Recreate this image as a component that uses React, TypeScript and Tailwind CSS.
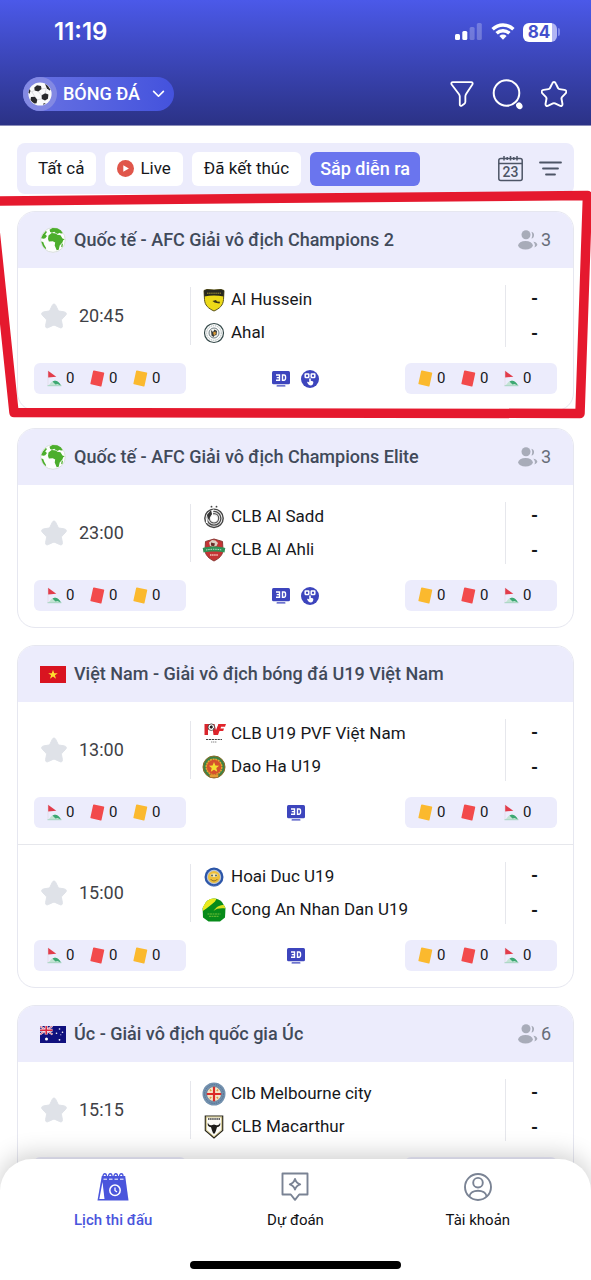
import type { ReactNode } from "react";

type CrestName =
  | "hussein"
  | "ahal"
  | "sadd"
  | "ahli"
  | "pvf"
  | "daoha"
  | "hoaiduc"
  | "congan"
  | "melbourne"
  | "macarthur";

type Match = {
  time: string;
  home: { name: string; crest: CrestName };
  away: { name: string; crest: CrestName };
  lineup: boolean;
};

type League = {
  title: string;
  flag: "globe" | "vietnam" | "australia";
  viewers?: number;
  matches: Match[];
};

const leagues: League[] = [
  {
    title: "Quốc tế - AFC Giải vô địch Champions 2",
    flag: "globe",
    viewers: 3,
    matches: [
      {
        time: "20:45",
        home: { name: "Al Hussein", crest: "hussein" },
        away: { name: "Ahal", crest: "ahal" },
        lineup: true,
      },
    ],
  },
  {
    title: "Quốc tế - AFC Giải vô địch Champions Elite",
    flag: "globe",
    viewers: 3,
    matches: [
      {
        time: "23:00",
        home: { name: "CLB Al Sadd", crest: "sadd" },
        away: { name: "CLB Al Ahli", crest: "ahli" },
        lineup: true,
      },
    ],
  },
  {
    title: "Việt Nam - Giải vô địch bóng đá U19 Việt Nam",
    flag: "vietnam",
    matches: [
      {
        time: "13:00",
        home: { name: "CLB U19 PVF Việt Nam", crest: "pvf" },
        away: { name: "Dao Ha U19", crest: "daoha" },
        lineup: false,
      },
      {
        time: "15:00",
        home: { name: "Hoai Duc U19", crest: "hoaiduc" },
        away: { name: "Cong An Nhan Dan U19", crest: "congan" },
        lineup: false,
      },
    ],
  },
  {
    title: "Úc - Giải vô địch quốc gia Úc",
    flag: "australia",
    viewers: 6,
    matches: [
      {
        time: "15:15",
        home: { name: "Clb Melbourne city", crest: "melbourne" },
        away: { name: "CLB Macarthur", crest: "macarthur" },
        lineup: false,
      },
    ],
  },
];

/* ---------- status bar ---------- */

function StatusBar() {
  return (
    <div className="flex h-16 items-center justify-between pr-[31px] pl-[54px] text-white">
      <span className="font-[Inter,sans-serif] text-2xl leading-7 font-semibold">11:19</span>
      <div className="flex items-center gap-2">
        <svg width="28" height="18" viewBox="0 0 28 18" fill="#fff">
          <rect x="0" y="11" width="5" height="6" rx="1.5" />
          <rect x="7.3" y="8" width="5" height="9" rx="1.5" />
          <rect x="14.6" y="4" width="5" height="13" rx="1.5" opacity=".25" />
          <rect x="21.8" y="0" width="5" height="17" rx="1.5" opacity=".25" />
        </svg>
        <svg width="24" height="18" viewBox="0 0 24 18" fill="none" stroke="#fff" strokeWidth="3.400">
          <path d="M1.600 6.300C7.500.5 16.500.5 22.400 6.300" />
          <path d="M5.600 10.300C9.200 6.800 14.800 6.800 18.400 10.300" />
          <path d="M8.400 12.900a5.200 5.200 0 0 1 7.200 0L12 16.700z" fill="#fff" stroke="none" />
        </svg>
        <div className="flex items-center">
          <span className="flex h-[19px] w-[34px] items-center justify-center rounded-md bg-linear-to-r from-white from-85% to-[#b2b5f3] to-85% pr-0.5 font-[Inter,sans-serif] text-[17px] leading-5 font-bold text-[#4450cc]">
            84
          </span>
          <span className="ml-px h-2 w-0.5 rounded-r bg-[#8088ea]" />
        </div>
      </div>
    </div>
  );
}

/* ---------- header icons ---------- */

function Ball() {
  return (
    <svg width="24" height="24" viewBox="0 0 24 24">
      <circle cx="12" cy="12" r="11.600" fill="#fafafa" />
      <g fill="#2a2a2c">
        <path d="M6.300 5.600l2.700-2.300 4 .7.600 3-3.300 2.600-3.700-1.100z" />
        <path d="M13.600 13.300l3.600-2.100 3.200 1.300-.500 4.200-2.900 1.800-3.200-1.500z" />
        <path d="M3 15l3.900-.3 2.400 3-.8 3.500-2.100.3A12 12 0 0 1 2.500 18z" />
        <path d="M17 1.800a12 12 0 0 1 5.500 5.900l-1 .9-2.700-2.400z" />
        <path d="M.6 10.500a11 11 0 0 1 1-3.500l.9 2.100-1.100 3z" />
        <path d="M15.500 21.300l2.300-.1-2.500 1.800z" />
      </g>
      <path
        d="M10.300 9.600l3.300 3.700M13.800 17l-4.500.7M13.600 7l4.300-.8M17.200 11.200l1-4.500M6.600 8.500L3 10M6.900 14.700L4 10"
        stroke="#c9c9cf"
        strokeWidth=".6"
        fill="none"
      />
    </svg>
  );
}

function FunnelIcon() {
  return (
    <svg width="24" height="28" viewBox="0 0 25 28" fill="none" stroke="#fff" strokeWidth="1.900" strokeLinejoin="round">
      <path d="M3 1.600h19c1.500 0 2.100 1.200 1.300 2.500l-6.500 10c-.6.900-.8 1.700-.8 2.600v5.500c0 .9-.3 1.500-1 2l-2.500 1.800c-1.300.8-2.300.3-2.300-1.100v-8.200c0-.9-.3-1.700-.8-2.500L1.700 4.100C.9 2.800 1.500 1.600 3 1.600z" />
    </svg>
  );
}

function SearchIcon() {
  return (
    <svg width="31" height="31" viewBox="0 0 31 31" fill="none">
      <circle cx="14.500" cy="14" r="12.800" stroke="#fff" strokeWidth="2" />
      <ellipse cx="27.300" cy="26.800" rx="3" ry="3.500" fill="#fff" transform="rotate(-35 27.300 26.800)" />
    </svg>
  );
}

const starPath =
  "M11.300 2.300c.7-1.700 2.700-1.700 3.400 0l2.300 4.700c.3.600.8 1 1.500 1.100l4.900.8c2 .3 2.600 2 1.200 3.500l-3.600 3.700c-.5.500-.6 1.100-.5 1.700l.9 4.700c.4 2-1 3-2.700 2.100L14 22.400c-.7-.3-1.300-.3-2 0l-4.700 2.200c-1.700.9-3.100-.1-2.700-2.100l.9-4.700c.1-.6 0-1.200-.5-1.700L1.400 12.400C0 10.900.6 9.200 2.600 8.900l4.900-.8C8.200 8 8.700 7.600 9 7z";

function StarIcon({ filled }: { filled?: boolean }) {
  return (
    <svg
      width="26"
      height="27"
      viewBox="0 0 26 27"
      fill={filled ? "#dfe2e8" : "none"}
      stroke={filled ? "#dfe2e8" : "#fff"}
      strokeWidth={filled ? 1 : 1.9}
      strokeLinejoin="round"
    >
      <path d={starPath} />
    </svg>
  );
}

function Header() {
  return (
    <header className="h-[126px] shrink-0 border-b border-[#8b8db9] bg-linear-to-b from-[#4b59e9] to-[#2b3286]">
      <StatusBar />
      <div className="flex items-center justify-between pt-[13px] pr-6 pl-[23px]">
        <button
          type="button"
          className="flex h-[34px] items-center rounded-full bg-linear-to-r from-[#6972e2] to-[#4452dd] pr-[9px] text-lg font-medium text-white"
        >
          <span className="mr-1.5 flex size-[34px] items-center justify-center rounded-full bg-[#8389e3]">
            <Ball />
          </span>
          BÓNG ĐÁ
          <svg className="ml-3" width="13" height="8" viewBox="0 0 14 9" fill="none" stroke="#fff" strokeWidth="1.900" strokeLinecap="round" strokeLinejoin="round">
            <path d="M1.500 1.500L7 7l5.500-5.500" />
          </svg>
        </button>
        <div className="flex items-center gap-[18px]">
          <button type="button" aria-label="Bộ lọc">
            <FunnelIcon />
          </button>
          <button type="button" aria-label="Tìm kiếm">
            <SearchIcon />
          </button>
          <button type="button" aria-label="Yêu thích">
            <StarIcon />
          </button>
        </div>
      </div>
    </header>
  );
}

/* ---------- filter bar ---------- */

function FilterButton({ active, children }: { active?: boolean; children: ReactNode }) {
  return (
    <button
      type="button"
      className={
        active
          ? "flex h-[34px] items-center gap-1.5 rounded-md bg-[#6a75ee] px-2.5 text-lg font-medium text-white"
          : "flex h-[34px] items-center gap-1.5 rounded-md bg-white px-3 text-[17px] text-[#16171b]"
      }
    >
      {children}
    </button>
  );
}

function FilterBar() {
  return (
    <div className="flex h-[51px] items-center justify-between rounded-lg bg-[#ececfc] pr-3 pl-[9px]">
      <div className="flex gap-[9px]">
        <FilterButton>Tất cả</FilterButton>
        <FilterButton>
          <svg width="17" height="17" viewBox="0 0 17 17">
            <circle cx="8.500" cy="8.500" r="8.500" fill="#e0564a" />
            <path d="M6.300 5.200v6.600l5.600-3.300z" fill="#fff" />
          </svg>
          Live
        </FilterButton>
        <FilterButton>Đã kết thúc</FilterButton>
        <FilterButton active>Sắp diễn ra</FilterButton>
      </div>
      <div className="flex items-center gap-4">
        <button type="button" aria-label="Chọn ngày 23" className="block">
          <svg width="25" height="26" viewBox="0 0 25 26" fill="none" stroke="#4d5566" strokeWidth="1.500">
            <rect x=".8" y="2.500" width="23.400" height="22" rx="2" />
            <path d="M.8 7.500h23.400M6 0v4.500M12.500 0v4.500M19 0v4.500M9.200 1v3M15.800 1v3" />
            <text
              x="12.500"
              y="21"
              textAnchor="middle"
              fontFamily="Roboto, sans-serif"
              fontSize="14"
              fontWeight="500"
              fill="#4d5566"
              stroke="none"
            >
              23
            </text>
          </svg>
        </button>
        <button type="button" aria-label="Sắp xếp" className="block">
          <svg width="23" height="15" viewBox="0 0 23 15" fill="none" stroke="#4d5566" strokeWidth="1.800" strokeLinecap="round">
            <path d="M1 1.500h21M4 7.500h15M7 13.500h9" />
          </svg>
        </button>
      </div>
    </div>
  );
}

/* ---------- league flags ---------- */

function Flag({ kind }: { kind: League["flag"] }) {
  if (kind === "globe") {
    return (
      <svg width="26" height="26" viewBox="0 0 26 26">
        <circle cx="13" cy="13" r="12.300" fill="#fcfdfc" stroke="#d9dfdc" strokeWidth="1" />
        <g fill="#4cae2c">
          <path d="M8.500 8.500l3.200-2.500 4.300.5 1.300 1.300 3.200.5 2 3.200 2.200.8-1.500 1-.8 2.200-2.700 3-1 4.300-2 .5-2-4.800.5-3-2.500-1.200-3.800.2L8 12z" />
          <path d="M9.500 2.800l3-1.800 4.700.3 3.600 2 2 3-1.800.2-2-.8-1 1.200-2.300-.8-1.500-1.300-2.200.9-1.800-.7z" />
          <path d="M1.200 11.200L2.800 7.500l3-3.500 1.200 1-1.800 2.500 1.800 1.500-1.700 2.200-1.700.5z" />
          <path d="M1.200 14.500l2 .5 1 2.700 2 3.500-.8.700A13 13 0 0 1 1.200 14.500z" />
          <path d="M21.500 17.500l1.500-1.200-.5 3-1.300 1.200z" />
        </g>
      </svg>
    );
  }
  if (kind === "vietnam") {
    return (
      <svg width="26" height="17" viewBox="0 0 26 17">
        <rect width="26" height="17" fill="#d91420" />
        <path d="M13 3.800l1.200 3.400h3.600l-2.900 2.100 1.100 3.400-3-2.100-3 2.100 1.100-3.400-2.900-2.100h3.600z" fill="#ffde2e" />
      </svg>
    );
  }
  return (
    <svg width="26" height="17" viewBox="0 0 26 17">
      <rect width="26" height="17" fill="#10107e" />
      <path d="M0 0l12.500 8.500M12.500 0L0 8.500" stroke="#f4e8f0" strokeWidth="2" />
      <path d="M0 0l12.500 8.500M12.500 0L0 8.500" stroke="#d33a50" strokeWidth=".7" />
      <path d="M6.250 0v8.500M0 4.250h12.500" stroke="#f4e8f0" strokeWidth="3" />
      <path d="M6.250 0v8.500M0 4.250h12.500" stroke="#d8263f" strokeWidth="1.600" />
      <g fill="#fff">
        <circle cx="6.500" cy="13" r="1.500" />
        <circle cx="19.500" cy="3" r=".8" />
        <circle cx="16.500" cy="7.300" r=".8" />
        <circle cx="22.500" cy="6.300" r=".8" />
        <circle cx="19.500" cy="13.800" r=".9" />
        <circle cx="20.800" cy="8.800" r=".5" />
      </g>
    </svg>
  );
}

function Viewers({ count }: { count: number }) {
  return (
    <span className="flex items-center gap-[3px] text-lg text-[#676d79]">
      <svg width="20" height="20" viewBox="0 0 20 20" fill="#a8acb9">
        <circle cx="8" cy="4.800" r="4.500" />
        <ellipse cx="7.500" cy="15.300" rx="7.300" ry="4.300" />
        <path d="M13.400 1.700c3.600.4 3.600 6.400 0 6.900 1.100-2.300 1.100-4.600 0-6.900z" />
        <path d="M15.200 11.700c4.300.3 6.100 4 1.200 5.800 1-2.200.5-4.200-1.200-5.800z" />
      </svg>
      {count}
    </span>
  );
}

/* ---------- club crests ---------- */

function Crest({ name }: { name: CrestName }) {
  const art: Record<CrestName, ReactNode> = {
    hussein: (
      <>
        <path d="M2 2.500l3-1 7 .5 7-.5 3 1-.5 9c-.3 6-4 9-9.500 11.500C6.500 20.500 2.800 17.500 2.500 11.500z" fill="#ecd918" stroke="#5a5318" strokeWidth="1" />
        <path d="M2 2.500l3-1 7 .5 7-.5 3 1-.3 6c-6-1.200-13.400-1.200-19.400 0z" fill="#28281f" />
        <path d="M5 5.200h14" stroke="#a49835" strokeWidth="1" strokeDasharray="1.500 .6" />
        <path d="M10.500 13l3.500-1 1 1.500 3 .3-.5 1.700-3-.5-2-.5z" fill="#3b3616" />
      </>
    ),
    ahal: (
      <>
        <circle cx="12" cy="12" r="9.500" fill="#fbfcfb" stroke="#364a4b" strokeWidth="1.200" />
        <circle cx="12" cy="12" r="7.300" fill="none" stroke="#a5b0b2" strokeWidth="1" strokeDasharray="1.300 .9" />
        <circle cx="12" cy="12" r="5" fill="#f3f3ef" stroke="#52626a" strokeWidth=".8" />
        <path d="M9 9l2 2 1.500-2.500L15 10l-.5 4-2 .5-1 1.500-2-1.500z" fill="#3a3c3a" />
        <path d="M11 11.500l2.500-1 .5 2.500-2 1.500z" fill="#d99a35" />
      </>
    ),
    sadd: (
      <>
        <circle cx="9.500" cy="1.700" r=".9" fill="#444" />
        <circle cx="14.500" cy="1.700" r=".9" fill="#444" />
        <circle cx="12" cy="13.300" r="9.200" fill="#ececec" stroke="#444" strokeWidth="1.400" />
        <circle cx="12" cy="13.300" r="6.900" fill="none" stroke="#4b4b4b" strokeWidth="1.300" />
        <circle cx="12" cy="13.300" r="4.700" fill="none" stroke="#555" strokeWidth="1.200" />
        <circle cx="12" cy="13.500" r="3" fill="#fff" />
        <path d="M4.500 18c0-5 1.500-8.500 6-12-1 5 0 7 3 8" fill="none" stroke="#fff" strokeWidth="1.600" />
        <path d="M5 10l4-5 1 4-4 6z" fill="#333" />
      </>
    ),
    ahli: (
      <>
        <path d="M3.500 3.500L12 1l8.500 2.500.5 9c-.5 5-4 8-9 10.500-5-2.500-8.500-5.500-9-10.500z" fill="#c53435" stroke="#8b3b36" strokeWidth="1" />
        <path d="M7 4.500l3-2.500 3.500.5L16 5l-1.500 3L11 9 8 8z" fill="#ddd0c4" />
        <path d="M9 4.500l4 1-1 3-3-1z" fill="#6c2a28" />
        <path d="M.7 10c7-2 15.600-2 22.600 0l-.8 4.500c-6-1.300-15-1.300-21 0z" fill="#2f9155" />
        <path d="M4 12c5-1 11-1 16 0" stroke="#b5d8bf" strokeWidth="1" fill="none" strokeDasharray="1.500 .8" />
        <path d="M8 17h8" stroke="#f0c8bd" strokeWidth="1.300" strokeDasharray="1.500 .6" />
      </>
    ),
    pvf: (
      <>
        <path d="M2.500 2h6c2.500 0 3 5-1 5.500H6V13H2.500z" fill="#d8252c" />
        <path d="M10 2h2.500l1.500 6 2.500-6H20l-5.500 11h-3z" fill="#d8252c" />
        <path d="M16.500 2H24l-1 2.800h-4L18.500 6.500H22l-.8 2.500H17.500L16 13h-2z" fill="#e1242b" />
        <circle cx="9.300" cy="5.200" r="3.300" fill="#fff" stroke="#222" strokeWidth=".7" />
        <path d="M8 4l2-.7 1 1.900-1.500 1.500L7.700 6zM11 7l1-1.300V7.500z" fill="#222" />
        <path d="M4 17.500h16" stroke="#444" strokeWidth="1.200" strokeDasharray="2.200 .7" />
        <path d="M9 20h6" stroke="#888" strokeWidth="1" strokeDasharray="1.300 .6" />
      </>
    ),
    daoha: (
      <>
        <circle cx="12" cy="12" r="11" fill="#3d8245" stroke="#8c6a26" strokeWidth="1" />
        <circle cx="12" cy="12" r="7.800" fill="#d5512c" stroke="#e4a62c" strokeWidth="1.500" strokeDasharray="2 .7" />
        <path d="M12 7l1.400 3.400 3.700.3-2.800 2.400.9 3.600-3.200-2-3.200 2 .9-3.600-2.800-2.400 3.700-.3z" fill="#f4dd31" />
        <path d="M7 19.500h10l-1.500 3h-7z" fill="#d8702c" />
        <path d="M8 21h8" stroke="#f0c73b" strokeWidth="1" />
      </>
    ),
    hoaiduc: (
      <>
        <circle cx="12" cy="12" r="9.500" fill="#2c56a8" />
        <circle cx="12" cy="12" r="6.600" fill="#eebf38" stroke="#b8c2d5" strokeWidth="1.200" />
        <path d="M8.300 9.500c1.500-1.500 6-1.500 7.400 0L15 12H9z" fill="#f5e7aa" />
        <circle cx="10" cy="10.500" r="1" fill="#566" />
        <circle cx="14" cy="10.500" r="1" fill="#566" />
        <path d="M8.500 14c2 2.500 5 2.500 7 0" stroke="#8e6f26" strokeWidth="1" fill="none" />
        <path d="M5 18a9.500 9.500 0 0 0 14 0" stroke="#7895cf" strokeWidth="1" fill="none" strokeDasharray="1 .7" />
      </>
    ),
    congan: (
      <>
        <path d="M4 4A11.500 11.500 0 0 1 12 .5 11.500 11.500 0 0 1 20 4l3.500 6-.5 9.500-5 4H6.500L1 19.500.6 10z" fill="#078b1a" />
        <path d="M4 4A11.500 11.500 0 0 1 14.500.8L13 3.500C10 6.500 5 10 .8 13L1 9z" fill="#e9ea1e" />
        <path d="M23.500 10.500C18 10 14.500 10.500 11.500 13c3-4.500 6.500-6 10.500-6z" fill="#d7df20" />
        <path d="M5.500 16h13M7 18.300h10" stroke="#6fbd34" strokeWidth="1" strokeDasharray="2 .5" />
      </>
    ),
    melbourne: (
      <>
        <circle cx="12" cy="12" r="11.500" fill="#7391ae" />
        <circle cx="12" cy="12" r="9.400" fill="none" stroke="#536f90" strokeWidth="1" strokeDasharray="1.300 1" />
        <circle cx="12" cy="12" r="7.400" fill="#f4e6c9" stroke="#4c6687" strokeWidth=".6" />
        <path d="M12 4.800v14.400M4.800 12h14.400" stroke="#dc2b27" strokeWidth="2.200" />
        <path d="M7.800 7.500l1.500 1.500M16.200 7.500L14.700 9M7.800 16.500l1.500-1.500M16.200 16.500L14.700 15" stroke="#d99a45" strokeWidth="1.500" />
      </>
    ),
    macarthur: (
      <>
        <path d="M3.300 1h17.400v14.500L12 23l-8.700-7.500z" fill="#fbfbf7" stroke="#29271d" strokeWidth="1.200" />
        <path d="M4.300 2v13l7.700 6.700L19.700 15V2z" fill="none" stroke="#b09b36" strokeWidth=".6" />
        <path d="M6 4h12" stroke="#333" strokeWidth="1.300" strokeDasharray="1.500 .6" />
        <path d="M6 7.500c.3 2.300 1.700 3 3.700 2.700L12 9.500l2.300.7c2 .3 3.400-.4 3.700-2.700 1 2.700-.5 4.500-3 4.800L14 15.500 12.800 18.500h-1.600L10 15.500l-1-3.200C6.500 12 5 10.200 6 7.500z" fill="#1d1c19" />
      </>
    ),
  };
  return (
    <svg className="shrink-0" width="24" height="24" viewBox="0 0 24 24">
      {art[name]}
    </svg>
  );
}

/* ---------- match statistics ---------- */

function CornerIcon() {
  return (
    <svg width="15" height="17" viewBox="0 0 15 17">
      <path d="M1 .8l8.300 6L1 7.500z" fill="#e23c4b" />
      <path d="M1 1v14.500" stroke="#ddd2dc" strokeWidth=".5" />
      <path d="M1.500 15.500l3-3.500 3.500-1.700c3 .6 4.800 2.300 6 5.200z" fill="#c3e3d3" />
      <path d="M5.500 11.400c3.500-1.600 6.500.4 8.500 4.100l-3.500-1.500-2 .6z" fill="#3da873" />
      <path d="M.5 15.700h14" stroke="#8ecbad" strokeWidth=".7" />
    </svg>
  );
}

function CardIcon({ tone }: { tone: "red" | "yellow" }) {
  return (
    <svg width="15" height="17" viewBox="0 0 15 17">
      <path
        d="M4 .4l9.600 2.200c.5.100.7.500.6.900l-2.700 12.400c-.1.500-.5.700-.9.600L1 14.300c-.5-.1-.7-.5-.6-.9L3.100 1c.1-.5.500-.7.900-.6z"
        fill={tone === "red" ? "#f24a4b" : "#fbb92e"}
      />
    </svg>
  );
}

function Stat({ icon }: { icon: ReactNode }) {
  return (
    <span className="flex w-[43px] items-center gap-1">
      {icon}
      <span>0</span>
    </span>
  );
}

function StatStrip({ side }: { side: "home" | "away" }) {
  const corner = <Stat icon={<CornerIcon />} />;
  const red = <Stat icon={<CardIcon tone="red" />} />;
  const yellow = <Stat icon={<CardIcon tone="yellow" />} />;
  return (
    <div className="flex h-[31px] w-[152px] items-center rounded-md bg-[#ececfc] pl-[13px] text-[15px] text-[#17181c]">
      {side === "home" ? corner : yellow}
      {red}
      {side === "home" ? yellow : corner}
    </div>
  );
}

function ThreeDIcon() {
  return (
    <svg width="18" height="16" viewBox="0 0 18 16">
      <rect width="18" height="13.300" rx="1.500" fill="#3d45bd" />
      <rect x="4.500" y="14.200" width="9" height="1.400" rx=".7" fill="#3d45bd" />
      <g fill="none" stroke="#fff" strokeWidth="1.400">
        <path d="M4 4h3.500v5.200H4M4.700 6.600h2.800" />
        <path d="M10.500 4h1.800c1.700 0 1.700 5.200 0 5.200h-1.800z" />
      </g>
    </svg>
  );
}

function HandIcon() {
  return (
    <svg width="18" height="18" viewBox="0 0 18 18">
      <circle cx="9" cy="9" r="9" fill="#3d45bd" />
      <g fill="#3d45bd" stroke="#fff" strokeWidth="1.500">
        <rect x="4.200" y="4" width="3.600" height="3.400" rx=".3" />
        <rect x="10.200" y="4" width="3.600" height="3.400" rx=".3" />
      </g>
      <path d="M8.200 9c0-1 1.600-1 1.600 0v1.700l1.800.5c.7.200.8.800.7 1.500-.3 2-1 2.700-2.500 2.700-1.700 0-2.500-.7-3.500-2.700-.3-.7.200-1.200.8-.9l1.100.6z" fill="#fff" />
    </svg>
  );
}

function MatchRow({ match }: { match: Match }) {
  return (
    <article className="px-4 pt-[15px] pb-4">
      <div className="flex h-[66px] items-center">
        <div className="flex h-[58px] w-[157px] items-center gap-3 border-r border-[#e6e7ec] pl-[7px]">
          <button type="button" aria-label="Theo dõi trận đấu">
            <StarIcon filled />
          </button>
          <time className="text-lg text-[#3f4146]">{match.time}</time>
        </div>
        <div className="flex-1 pl-[11px] text-[17px] text-[#16171b]">
          {[match.home, match.away].map((team) => (
            <div key={team.name} className="flex h-[33px] items-center gap-[5px]">
              <Crest name={team.crest} />
              {team.name}
            </div>
          ))}
        </div>
        <div className="flex h-[62px] w-[52px] flex-col items-center justify-center border-l border-[#e6e7ec] pl-1.5 text-lg leading-[35px] font-bold text-[#16171b]">
          <span>-</span>
          <span>-</span>
        </div>
      </div>
      <div className="mt-3.5 flex items-center justify-between">
        <StatStrip side="home" />
        <div className="flex items-center gap-[11px]">
          <ThreeDIcon />
          {match.lineup && <HandIcon />}
        </div>
        <StatStrip side="away" />
      </div>
    </article>
  );
}

function LeagueCard({ league }: { league: League }) {
  return (
    <section className="overflow-hidden rounded-[18px] border border-[#e6e7f0] bg-white">
      <div className="flex h-14 items-center bg-[#ececfc] pr-[22px] pl-[22px]">
        <Flag kind={league.flag} />
        <h2 className="ml-2 flex-1 text-lg font-medium text-[#414a5a]">{league.title}</h2>
        {league.viewers !== undefined && <Viewers count={league.viewers} />}
      </div>
      <div className="divide-y divide-[#e6e7ec]">
        {league.matches.map((match) => (
          <MatchRow key={match.time} match={match} />
        ))}
      </div>
    </section>
  );
}

/* ---------- highlight drawn by hand round the first league ---------- */

function Highlight() {
  return (
    <svg
      className="pointer-events-none absolute top-[180px] left-0 h-[250px] w-full"
      viewBox="0 180 591 250"
      preserveAspectRatio="none"
      fill="none"
      stroke="#e5192e"
      strokeWidth="9.500"
      strokeLinejoin="round"
    >
      <path d="M-6 201L587.500 195.500L580 413.500L14 412.500L-5 230" />
    </svg>
  );
}

/* ---------- bottom navigation ---------- */

function NavItem({ label, active, children }: { label: string; active?: boolean; children: ReactNode }) {
  return (
    <a href="#" className="flex flex-1 flex-col items-center">
      <span className="flex h-8 items-center">{children}</span>
      <span
        className={
          active
            ? "mt-[7px] text-[15px] leading-5 font-medium text-[#4a55dc]"
            : "mt-[7px] text-[15px] leading-5 text-[#101114]"
        }
      >
        {label}
      </span>
    </a>
  );
}

function BottomNav() {
  return (
    <nav className="absolute inset-x-0 bottom-0 rounded-t-[32px] bg-white px-[22px] pt-3 pb-[11px] shadow-[0_-4px_24px_rgba(0,0,0,0.2)]">
      <div className="flex">
        <NavItem label="Lịch thi đấu" active>
          <svg width="32" height="28" viewBox="0 0 32 28">
            <path d="M4.800 3h23.400L31.500 27.500H.5z" fill="#4a55dc" />
            <path d="M5.500 9l2 17H2.300z" fill="#fff" />
            <g fill="none" stroke="#4a55dc" strokeWidth="1.300">
              <path d="M6 3c0-3 3.500-3 3.500 0s-2.500 2.500-2.500 1M11.500 3c0-3 3.500-3 3.500 0s-2.500 2.500-2.500 1M17 3c0-3 3.500-3 3.500 0s-2.500 2.500-2.500 1M22.500 3c0-3 3.500-3 3.500 0s-2.500 2.500-2.500 1" />
            </g>
            <path d="M6.500 6.200h21" stroke="#fff" strokeWidth="1" strokeDasharray="3.500 2" />
            <circle cx="18" cy="17.300" r="5.200" fill="none" stroke="#fff" strokeWidth="1.500" />
            <path d="M18 14.500v3l2 1.500" fill="none" stroke="#fff" strokeWidth="1.300" />
          </svg>
        </NavItem>
        <NavItem label="Dự đoán">
          <svg width="28" height="30" viewBox="0 0 28 30" fill="none" stroke="#7a8394" strokeWidth="1.900" strokeLinejoin="round">
            <path d="M1.500 1.500h25v21h-8.300L14 27.800l-4.200-5.300H1.500z" />
            <path d="M14 7c.8 3 2.200 4.400 5.200 5.300-3 .9-4.400 2.300-5.200 5.300-.8-3-2.200-4.400-5.200-5.300 3-.9 4.400-2.300 5.200-5.300z" />
          </svg>
        </NavItem>
        <NavItem label="Tài khoản">
          <svg width="28" height="28" viewBox="0 0 28 28" fill="none" stroke="#7a8394" strokeWidth="1.900">
            <circle cx="14" cy="14" r="13" />
            <circle cx="14" cy="9.700" r="4.800" />
            <path d="M5.300 23.500c1.200-7.700 16.200-7.700 17.400 0" />
          </svg>
        </NavItem>
      </div>
      <div className="mx-auto mt-[31px] h-2 w-[211px] rounded-full bg-black" />
    </nav>
  );
}

export default function App() {
  return (
    <div className="relative flex h-screen flex-col overflow-hidden bg-white font-[Roboto,'Noto_Sans',sans-serif]">
      <Header />
      <main className="min-h-0 flex-1 overflow-hidden px-[17px] pt-[17px]">
        <FilterBar />
        <div className="mt-[17px] flex flex-col gap-[17px]">
          {leagues.map((league) => (
            <LeagueCard key={league.title} league={league} />
          ))}
        </div>
      </main>
      <Highlight />
      <BottomNav />
    </div>
  );
}
